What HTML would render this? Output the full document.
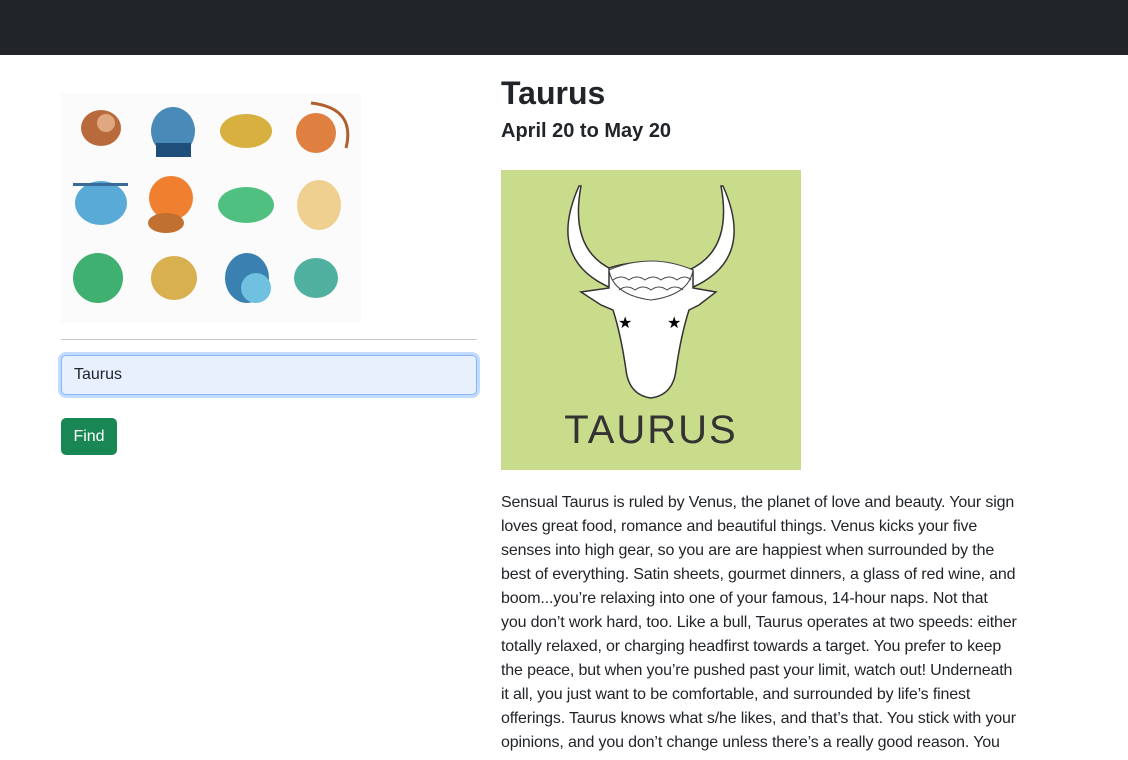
<!DOCTYPE html>
<html><head><meta charset="utf-8"><style>
*{box-sizing:border-box;margin:0;padding:0}
body{width:1128px;height:760px;overflow:hidden;background:#fff;font-family:"Liberation Sans",sans-serif;color:#212529}
.nav{height:55px;background:#212529}
.left{position:absolute;left:61px;top:93px;width:416px}
.right{position:absolute;left:501px;top:73px;width:600px}
hr{border:0;border-top:1px solid #c8c9ca;margin-top:11px}
.inp{margin-top:15px;height:40px;border:1px solid #86b7fe;box-shadow:0 0 0 3px rgba(13,110,253,.25);background:#e8f0fe;border-radius:5px;padding:0 12px;line-height:38px;font-size:16px}
.btn{margin-top:23px;width:56px;height:37px;background:#198754;color:#fff;border-radius:5px;font-size:16px;line-height:37px;text-align:center}
h2{font-size:32px;font-weight:bold;line-height:40px}
h5{font-size:20px;font-weight:bold;line-height:24px;margin-top:6px}
.tb{margin-top:27px;width:300px;height:300px;background:#c9dc8c}
p{margin-top:21px;font-size:16px;line-height:24px;white-space:nowrap;letter-spacing:-0.15px}
</style></head><body>
<div class="nav"></div>
<div class="left">
<svg width="300" height="230" viewBox="0 0 300 230">
<rect width="300" height="230" fill="#fbfbfb"/>
<g>
<ellipse cx="40" cy="35" rx="20" ry="18" fill="#b86a3a"/><circle cx="45" cy="30" r="9" fill="#e0a880"/>
<ellipse cx="112" cy="38" rx="22" ry="24" fill="#4a8ab8"/><rect x="95" y="50" width="35" height="14" fill="#1e4f7a"/>
<ellipse cx="185" cy="38" rx="26" ry="17" fill="#d8b040"/>
<ellipse cx="255" cy="40" rx="20" ry="20" fill="#e08040"/><path d="M250 10 Q295 15 285 55" stroke="#b06030" stroke-width="3" fill="none"/>
<ellipse cx="40" cy="110" rx="26" ry="22" fill="#5aaad8"/><rect x="12" y="90" width="55" height="3" fill="#3a6a9a"/>
<circle cx="110" cy="105" r="22" fill="#f08030"/><ellipse cx="105" cy="130" rx="18" ry="10" fill="#c07030"/>
<ellipse cx="185" cy="112" rx="28" ry="18" fill="#50c080"/>
<ellipse cx="258" cy="112" rx="22" ry="25" fill="#f0d090"/>
<ellipse cx="37" cy="185" rx="25" ry="25" fill="#40b070"/>
<ellipse cx="113" cy="185" rx="23" ry="22" fill="#d8b050"/>
<ellipse cx="186" cy="185" rx="22" ry="25" fill="#3a80b0"/><ellipse cx="195" cy="195" rx="15" ry="15" fill="#70c0e0"/>
<ellipse cx="255" cy="185" rx="22" ry="20" fill="#50b0a0"/>
</g>
</svg>
<hr>
<div class="inp">Taurus</div>
<div class="btn">Find</div>
</div>
<div class="right">
<h2>Taurus</h2>
<h5>April 20 to May 20</h5>
<div class="tb"><svg width="300" height="300" viewBox="0 0 300 300">
<path d="M78 16 Q45 90 110 118 L112 100 Q68 80 80 16Z" fill="#fff" stroke="#333" stroke-width="1.5"/>
<path d="M222 16 Q255 90 190 118 L188 100 Q232 80 220 16Z" fill="#fff" stroke="#333" stroke-width="1.5"/>
<path d="M108 98 Q150 85 192 100 L192 118 L215 122 L198 135 L188 140 Q180 165 175 200 Q172 225 150 228 Q128 225 125 200 Q120 165 112 140 L100 135 L80 122 L108 118Z" fill="#fff" stroke="#333" stroke-width="1.5"/>
<path d="M108 100 Q150 82 192 100 Q188 125 150 130 Q112 125 108 100Z" fill="#fff" stroke="#444" stroke-width="1"/>
<path d="M112 110 Q120 104 128 110 Q136 104 144 110 Q152 104 160 110 Q168 104 176 110 Q184 104 190 110 M118 120 Q126 114 134 120 Q142 114 150 120 Q158 114 166 120 Q174 114 182 120" fill="none" stroke="#444" stroke-width="1"/>
<text x="117" y="158" font-size="16">★</text><text x="166" y="158" font-size="16">★</text>
<text x="150" y="273" text-anchor="middle" font-family="Liberation Sans,sans-serif" font-size="40" fill="#333" letter-spacing="2">TAURUS</text>
</svg></div>
<p>Sensual Taurus is ruled by Venus, the planet of love and beauty. Your sign<br>loves great food, romance and beautiful things. Venus kicks your five<br>senses into high gear, so you are are happiest when surrounded by the<br>best of everything. Satin sheets, gourmet dinners, a glass of red wine, and<br>boom...you’re relaxing into one of your famous, 14-hour naps. Not that<br>you don’t work hard, too. Like a bull, Taurus operates at two speeds: either<br>totally relaxed, or charging headfirst towards a target. You prefer to keep<br>the peace, but when you’re pushed past your limit, watch out! Underneath<br>it all, you just want to be comfortable, and surrounded by life’s finest<br>offerings. Taurus knows what s/he likes, and that’s that. You stick with your<br>opinions, and you don’t change unless there’s a really good reason. You</p>
</div>
</body></html>
